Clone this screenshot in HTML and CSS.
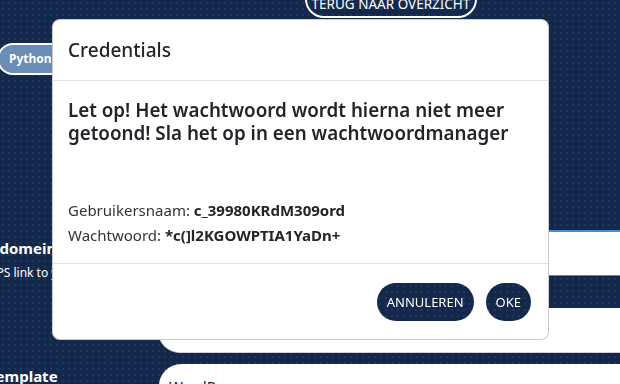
FILE: index.html
```html
<!DOCTYPE html>
<html lang="nl">
<head>
<meta charset="utf-8">
<title>Credentials</title>
<link rel="stylesheet" href="styles.css">
</head>
<body>
<div class="page">
  <div class="topbar">
    <button class="btn-outline">Terug naar overzicht</button>
    <span class="btn-round"></span>
  </div>
  <div class="tags">
    <span class="tag">Python</span>
  </div>
  <div class="content">
    <div class="labels">
      <div class="label-group">
        <div class="label-title">Subdomein</div>
        <div class="label-sub">HTTPS link to your app</div>
      </div>
      <div class="label-title label-template">Template</div>
    </div>
    <div class="cards">
      <div class="card card-a"></div>
      <div class="card card-b"></div>
      <div class="card card-c">WordPress</div>
    </div>
  </div>
</div>

<div class="modal" role="dialog">
  <div class="modal-header">
    <h5 class="modal-title">Credentials</h5>
  </div>
  <div class="modal-body">
    <h4 class="warning">Let op! Het wachtwoord wordt hierna niet meer getoond! Sla het op in een wachtwoordmanager</h4>
    <div class="cred">Gebruikersnaam: <b>c_39980KRdM309ord</b></div>
    <div class="cred">Wachtwoord: <b>*c(]l2KGOWPTIA1YaDn+</b></div>
  </div>
  <div class="modal-footer">
    <button class="btn">Annuleren</button>
    <button class="btn">Oke</button>
  </div>
</div>
</body>
</html>
```

FILE: styles.css
```css
html, body {
  margin: 0;
  padding: 0;
  height: 384px;
  overflow: hidden;
}
body {
  background-color: #13284b;
  background-image: radial-gradient(circle, rgba(120,150,200,0.13) 0.7px, transparent 1.2px);
  background-size: 6px 6px;
  font-family: "Noto Sans", "Open Sans", sans-serif;
  color: #fff;
}
.page {
  width: 620px;
}
.topbar {
  display: flex;
  align-items: flex-end;
  height: 18px;
  padding-left: 305px;
  gap: 148px;
}
.btn-outline {
  height: 38px;
  width: 172px;
  border: 2px solid #fff;
  border-radius: 19px;
  background: transparent;
  color: #fff;
  font-family: "Noto Sans", sans-serif;
  font-size: 13.5px;
  text-transform: uppercase;
  padding: 11px 0 0;
  flex-shrink: 0;
  line-height: 1;
}
.btn-round {
  width: 36px;
  height: 36px;
  border: 2px solid #fff;
  border-radius: 50%;
  flex-shrink: 0;
  margin-bottom: 12px;
}
.tags {
  margin-top: 25px;
  margin-left: -3px;
  display: flex;
}
.tag {
  display: inline-block;
  background: #6a8db6;
  border: 2px solid #fff;
  border-radius: 16px;
  color: #fff;
  font-weight: 700;
  font-size: 12px;
  line-height: 28px;
  padding: 0 12px 0 10px;
}
.content {
  display: grid;
  grid-template-columns: 158px 1fr;
}
.labels {
  padding-top: 163px;
  margin-left: -28px;
}
.label-title {
  font-weight: 700;
  font-size: 15px;
  line-height: 20px;
}
.label-sub {
  font-size: 12px;
  margin-top: 7px;
  margin-left: 2px;
  line-height: 16px;
}
.label-template {
  margin-top: 85px;
  margin-left: 16px;
}
.cards {
  padding-top: 155px;
  display: flex;
  flex-direction: column;
}
.card {
  background: #fff;
  margin-right: -40px;
}
.card-a {
  height: 43px;
  border-top: 2px solid #3a8fe0;
  border-bottom: 1px solid #3a8fe0;
}
.card-b {
  margin-top: 32px;
  height: 44px;
  border-bottom: 1px solid #cfd3d8;
  border-bottom-left-radius: 22px;
}
.card-c {
  margin-top: 11px;
  margin-left: 1px;
  height: 60px;
  border-top-left-radius: 22px;
  color: #212529;
  font-size: 15px;
  line-height: 20px;
  padding: 12px 10px;
}

.modal {
  position: fixed;
  left: 52px;
  top: 19px;
  width: 497px;
  box-sizing: border-box;
  background: #fff;
  border: 1px solid rgba(0,0,0,0.2);
  border-radius: 8px;
  color: #212529;
  font-family: "Noto Sans", "Open Sans", sans-serif;
}
.modal-header {
  height: 61px;
  box-sizing: border-box;
  padding: 0 15px;
  display: flex;
  align-items: center;
  border-bottom: 1px solid #dee2e6;
}
.modal-title {
  margin: 0;
  font-size: 19px;
  font-weight: 500;
  line-height: 24px;
}
.modal-body {
  padding: 18px 15px 15px;
}
.warning {
  margin: 0 0 53px;
  font-size: 18.8px;
  font-weight: 600;
  line-height: 23px;
  color: #212529;
}
.cred {
  font-size: 15px;
  line-height: 25px;
  color: #333;
}
.cred b {
  color: #212529;
  font-weight: 700;
}
.modal-footer {
  border-top: 1px solid #dee2e6;
  height: 76px;
  box-sizing: border-box;
  display: flex;
  justify-content: flex-end;
  align-items: center;
  gap: 12px;
  padding: 0 17px;
}
.btn {
  height: 38px;
  border: 0;
  border-radius: 19px;
  background-color: #13284b;
  background-image: radial-gradient(circle, rgba(120,150,200,0.13) 0.7px, transparent 1.2px);
  background-size: 6px 6px;
  color: #fff;
  font-family: "Noto Sans", sans-serif;
  font-size: 13px;
  text-transform: uppercase;
  padding: 0 10px;
}
```
